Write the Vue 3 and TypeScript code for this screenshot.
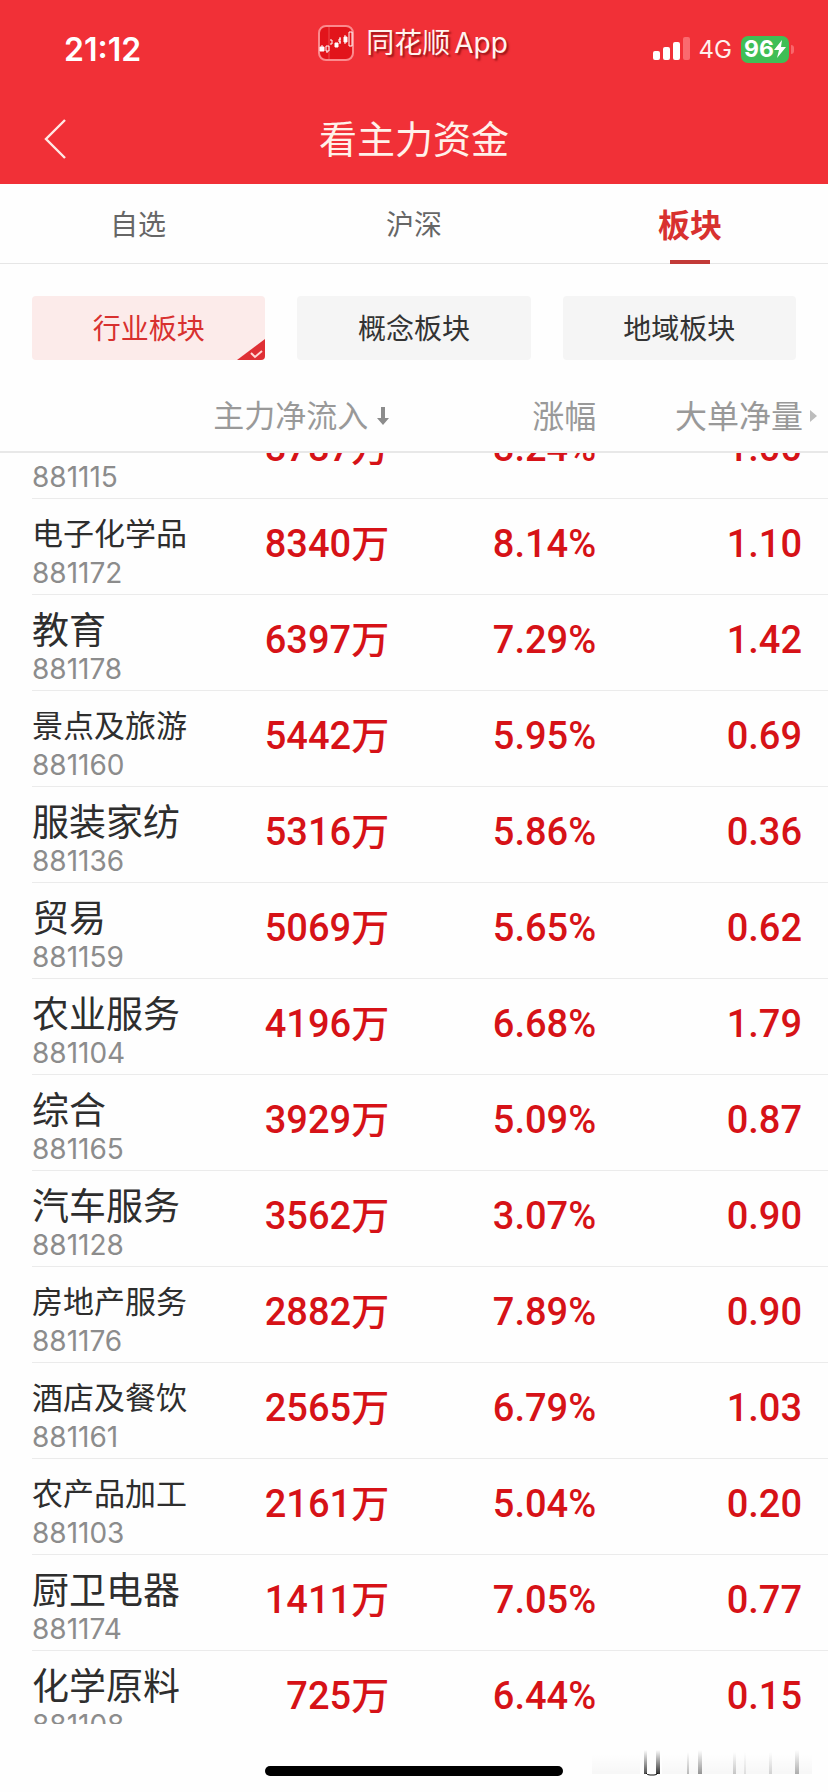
<script setup lang="ts">
import { onMounted, ref } from 'vue'

interface Sector {
  name: string
  code: string
  inflow: string
  change: string
  volume: string
}

const tabs: string[] = ['自选', '沪深', '板块']
const activeTab = ref('板块')

const groups: string[] = ['行业板块', '概念板块', '地域板块']
const activeGroup = ref('行业板块')

const sectors: Sector[] = [
  { name: '', code: '881115', inflow: '8787万', change: '8.24%', volume: '1.00' },
  { name: '电子化学品', code: '881172', inflow: '8340万', change: '8.14%', volume: '1.10' },
  { name: '教育', code: '881178', inflow: '6397万', change: '7.29%', volume: '1.42' },
  { name: '景点及旅游', code: '881160', inflow: '5442万', change: '5.95%', volume: '0.69' },
  { name: '服装家纺', code: '881136', inflow: '5316万', change: '5.86%', volume: '0.36' },
  { name: '贸易', code: '881159', inflow: '5069万', change: '5.65%', volume: '0.62' },
  { name: '农业服务', code: '881104', inflow: '4196万', change: '6.68%', volume: '1.79' },
  { name: '综合', code: '881165', inflow: '3929万', change: '5.09%', volume: '0.87' },
  { name: '汽车服务', code: '881128', inflow: '3562万', change: '3.07%', volume: '0.90' },
  { name: '房地产服务', code: '881176', inflow: '2882万', change: '7.89%', volume: '0.90' },
  { name: '酒店及餐饮', code: '881161', inflow: '2565万', change: '6.79%', volume: '1.03' },
  { name: '农产品加工', code: '881103', inflow: '2161万', change: '5.04%', volume: '0.20' },
  { name: '厨卫电器', code: '881174', inflow: '1411万', change: '7.05%', volume: '0.77' },
  { name: '化学原料', code: '881108', inflow: '725万', change: '6.44%', volume: '0.15' },
]

const rows = ref<HTMLElement | null>(null)

onMounted(() => {
  if (rows.value) rows.value.scrollTop = 50
})
</script>

<template>
  <div class="page">
    <header class="top">
      <div class="status">
        <span class="time">21:12</span>
        <span class="brand">
          <svg class="brand-icon" viewBox="0 0 36 36" aria-hidden="true">
            <rect x="1" y="1" width="34" height="34" rx="7" fill="#e2141b" stroke="#fb8a8d" stroke-width="2" />
            <path d="M11 2v32" stroke="#ee4a4e" stroke-width="1" />
            <path d="M2 22h4v4H2zM4 20v2M17 18h3v4h-3zM26 12h3v5h-3zM27 10v9" fill="#fff" stroke="#fff" stroke-width="1" />
            <path d="M8 21h3v5H8zM9 26v2M12 15h2v4h-2M23 14h-2v3h2M22 12v7M31 7h3v14h-3z" fill="none" stroke="#fff" stroke-width="1" />
          </svg>
          <span class="brand-name"><span>同花顺</span><span>App</span></span>
        </span>
        <span class="indicators">
          <svg class="signal" viewBox="0 0 38 24" aria-hidden="true">
            <rect x="0" y="14" width="7" height="9" rx="2" fill="#fff" />
            <rect x="10" y="10" width="7" height="13" rx="2" fill="#fff" />
            <rect x="20" y="5" width="7" height="18" rx="2" fill="#fff" />
            <rect x="30" y="0" width="7" height="23" rx="2" fill="#fa6a6f" />
          </svg>
          <span class="network">4G</span>
          <span class="battery">
            <span class="charge">96<svg viewBox="0 0 12 18" class="bolt" aria-hidden="true"><path d="M8 0 0 10h5L3 18 12 7H7z" fill="#fff" /></svg></span>
            <span class="nub"></span>
          </span>
        </span>
      </div>
      <div class="titlebar">
        <button class="back" type="button" aria-label="返回">
          <svg viewBox="0 0 22 40" aria-hidden="true">
            <path d="M21 1 2 20 21 39" fill="none" stroke="#ffe9e5" stroke-width="2.4" />
          </svg>
        </button>
        <h1>看主力资金</h1>
      </div>
    </header>

    <nav class="tabs">
      <button
        v-for="tab in tabs"
        :key="tab"
        type="button"
        :class="{ active: tab === activeTab }"
        @click="activeTab = tab"
      >{{ tab }}</button>
    </nav>

    <div class="groups">
      <button
        v-for="group in groups"
        :key="group"
        type="button"
        :class="{ active: group === activeGroup }"
        @click="activeGroup = group"
      >
        {{ group }}
        <svg v-if="group === activeGroup" class="corner" viewBox="0 0 28 21" aria-hidden="true">
          <path d="M28 0v21H0z" fill="#df3035" />
          <path d="m14 14 4 4 7-6" fill="none" stroke="#ffd9d6" stroke-width="2" />
        </svg>
      </button>
    </div>

    <table>
      <thead>
        <tr>
          <td></td>
          <th scope="col" class="sorted">
            主力净流入<svg class="arrow" viewBox="0 0 12 18" aria-hidden="true"><path d="M4 0h4v11h4l-6 7-6-7h4z" fill="#8c8c8c" /></svg>
          </th>
          <th scope="col">涨幅</th>
          <th scope="col" class="more">
            大单净量<svg class="caret" viewBox="0 0 7 12" aria-hidden="true"><path d="M0 0l7 6-7 6z" fill="#bdbdbd" /></svg>
          </th>
        </tr>
      </thead>
      <tbody ref="rows">
        <tr v-for="sector in sectors" :key="sector.code">
          <th scope="row">
            <span class="name" :class="{ long: sector.name.length > 4 }">{{ sector.name }}</span>
            <span class="code">{{ sector.code }}</span>
          </th>
          <td>{{ sector.inflow }}</td>
          <td>{{ sector.change }}</td>
          <td class="last">{{ sector.volume }}</td>
        </tr>
      </tbody>
    </table>

    <footer class="bottom">
      <span class="home"></span>
      <svg class="smudge" viewBox="0 0 224 26" aria-hidden="true">
        <defs>
          <linearGradient id="fade" x1="0" y1="0" x2="0" y2="1">
            <stop offset="0" stop-color="#000" stop-opacity="0" />
            <stop offset="1" stop-color="#000" stop-opacity="1" />
          </linearGradient>
        </defs>
        <g fill="url(#fade)">
          <rect x="52" y="0" width="3" height="24" opacity=".7" />
          <rect x="64" y="0" width="4" height="24" opacity=".8" />
          <rect x="95" y="2" width="2" height="22" opacity=".25" />
          <rect x="106" y="0" width="4" height="24" opacity=".4" />
          <rect x="141" y="2" width="3" height="22" opacity=".2" />
          <rect x="152" y="2" width="2" height="22" opacity=".1" />
          <rect x="177" y="2" width="3" height="22" opacity=".15" />
          <rect x="203" y="0" width="4" height="24" opacity=".3" />
          <rect x="0" y="4" width="48" height="20" opacity=".03" />
          <rect x="70" y="4" width="150" height="20" opacity=".03" />
        </g>
        <path d="M54 23q1 2 4 2h4q3 0 4-2" fill="none" stroke="#111" stroke-width="1" />
      </svg>
    </footer>
  </div>
</template>

<style>
body {
  margin: 0;
  background: #fff;
}
</style>

<style scoped>
.page {
  display: flex;
  flex-direction: column;
  height: 100vh;
  background: #fefefe;
  color: #333;
  font-family: "Noto Sans CJK SC", sans-serif;
}

button {
  padding: 0;
  border: 0;
  background: none;
  font-family: inherit;
  cursor: pointer;
}

.top {
  flex: none;
  background: #f13037;
  color: #fff;
}

.status {
  display: grid;
  grid-template-columns: 1fr auto 1fr;
  align-items: center;
  height: 98px;
  padding: 0 34px 0 64px;
  font-family: Inter, "Noto Sans CJK SC", sans-serif;
}

.time {
  font-size: 32px;
  font-weight: 600;
}

.brand {
  display: flex;
  align-items: center;
  gap: 12px;
  padding: 0 32px 12px 0;
  color: #fff3ef;
  font-size: 28px;
  line-height: 36px;
  text-shadow: 2px 2px 2px rgba(90, 0, 0, 0.6);
}

.brand-name {
  display: flex;
  gap: 4px;
}

.brand-icon {
  width: 36px;
  height: 36px;
}

.indicators {
  display: flex;
  justify-content: flex-end;
  align-items: center;
}

.signal {
  width: 38px;
  height: 24px;
}

.network {
  margin: 0 9px 0 8px;
  color: #fff0ee;
  font-size: 24px;
}

.battery {
  display: flex;
  align-items: center;
  gap: 2px;
}

.charge {
  display: flex;
  align-items: center;
  justify-content: center;
  width: 48px;
  height: 27px;
  border-radius: 7px;
  background: #40be55;
  font-size: 23px;
  font-weight: 700;
}

.bolt {
  width: 12px;
  height: 18px;
}

.nub {
  width: 3px;
  height: 9px;
  border-radius: 0 3px 3px 0;
  background: #f9666b;
}

.titlebar {
  display: grid;
  grid-template-columns: 1fr auto 1fr;
  align-items: center;
  height: 86px;
  padding: 0 44px 4px;
  box-sizing: border-box;
}

.back {
  justify-self: start;
  height: 40px;
}

.back svg {
  display: block;
  width: 22px;
  height: 40px;
}

h1 {
  margin: 0;
  padding-bottom: 4px;
  color: #fff1ea;
  font-size: 38px;
  font-weight: 400;
  line-height: 48px;
}

.tabs {
  display: grid;
  flex: none;
  grid-template-columns: repeat(3, 1fr);
  height: 79px;
  border-bottom: 1px solid #e6e6e6;
}

.tabs button {
  position: relative;
  padding-bottom: 2px;
  color: #666;
  font-size: 28px;
}

.tabs .active {
  color: #d8312f;
  font-size: 32px;
  font-weight: 700;
}

.tabs .active::after {
  position: absolute;
  bottom: -1px;
  left: 50%;
  width: 40px;
  height: 4px;
  margin-left: -20px;
  background: #c23a38;
  content: "";
}

.groups {
  display: grid;
  flex: none;
  grid-template-columns: repeat(3, 1fr);
  gap: 32px;
  padding: 32px 32px 0;
}

.groups button {
  position: relative;
  height: 64px;
  padding-bottom: 2px;
  overflow: hidden;
  border-radius: 4px;
  background: #f5f5f5;
  color: #333;
  font-size: 28px;
}

.groups .active {
  background: #fcebea;
  color: #d8312f;
}

.corner {
  position: absolute;
  right: 0;
  bottom: 0;
  width: 28px;
  height: 21px;
}

table {
  display: flex;
  flex: 1;
  flex-direction: column;
  min-height: 0;
}

thead {
  display: block;
  flex: none;
  border-bottom: 2px solid #e8e8e8;
}

tbody {
  display: block;
  flex: 1;
  min-height: 0;
  overflow-y: auto;
  scrollbar-width: none;
}

tr {
  display: grid;
  grid-template-columns: 24fr 23fr 25fr 28fr;
}

th,
td {
  min-width: 0;
  padding: 0;
  box-sizing: border-box;
  white-space: nowrap;
}

thead th {
  height: 91px;
  padding-top: 34px;
  color: #999;
  font-size: 32px;
  font-weight: 400;
  line-height: 40px;
  text-align: right;
}

thead .sorted {
  font-size: 31px;
}

thead .more {
  padding-right: 11px;
}

.arrow {
  width: 12px;
  height: 18px;
  margin-left: 9px;
  vertical-align: 2px;
}

.caret {
  width: 7px;
  height: 12px;
  margin-left: 7px;
  vertical-align: 6px;
}

tbody td {
  height: 96px;
  padding-top: 21px;
  border-bottom: 1px solid #ebebeb;
  color: #d61217;
  font-family: Roboto, "Noto Sans CJK SC", sans-serif;
  font-size: 38px;
  font-weight: 500;
  line-height: 48px;
  text-align: right;
}

tbody .last {
  padding-right: 26px;
}

tbody th {
  display: flex;
  flex-direction: column;
  height: 96px;
  margin-left: 32px;
  padding-top: 9px;
  border-bottom: 1px solid #ebebeb;
  font-weight: 400;
  text-align: left;
}

.name {
  height: 50px;
  color: #2e2e2e;
  font-size: 37px;
  line-height: 48px;
}

.name.long {
  font-size: 31px;
}

.code {
  color: #8c8c8c;
  font-family: Inter, sans-serif;
  font-size: 28px;
  line-height: 30px;
}

.bottom {
  position: relative;
  display: flex;
  flex: none;
  justify-content: center;
  align-items: flex-end;
  height: 68px;
  padding-bottom: 16px;
  box-sizing: border-box;
}

.home {
  width: 36%;
  height: 10px;
  border-radius: 5px;
  background: #000;
}

.smudge {
  position: absolute;
  right: 12px;
  bottom: 16px;
  width: 224px;
  height: 26px;
}
</style>
